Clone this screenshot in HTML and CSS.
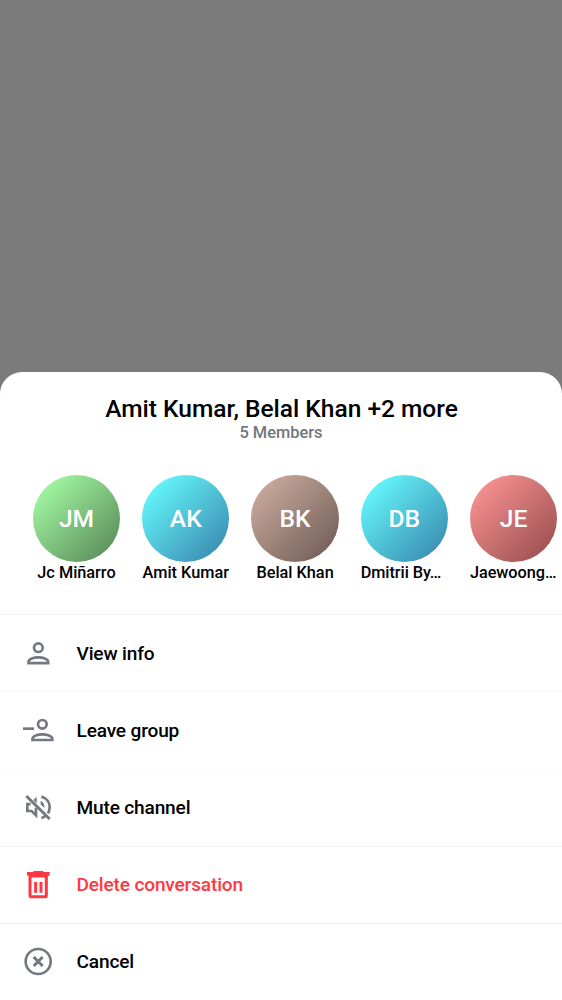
FILE: index.html
```html
<!DOCTYPE html>
<html lang="en">
<head>
<meta charset="utf-8">
<title>Channel options</title>
<link rel="stylesheet" href="styles.css">
</head>
<body>
<main class="sheet">
  <header class="header">
    <h1 class="title">Amit Kumar, Belal Khan +2 more</h1>
    <p class="subtitle">5 Members</p>
  </header>
  <ul class="members">
    <li class="member"><div class="avatar green">JM</div><span class="name">Jc Miñarro</span></li>
    <li class="member"><div class="avatar cyan">AK</div><span class="name">Amit Kumar</span></li>
    <li class="member"><div class="avatar brown">BK</div><span class="name">Belal Khan</span></li>
    <li class="member"><div class="avatar cyan">DB</div><span class="name clipped">Dmitrii By…</span></li>
    <li class="member"><div class="avatar red">JE</div><span class="name clipped">Jaewoong…</span></li>
  </ul>
  <nav class="options">
    <a class="option">
      <svg class="icon" viewBox="0 0 168 138"><circle cx="85" cy="53" r="13"/><path d="M55.500 99.500V96C55.500 87 72 82 85 82S114.500 87 114.500 96V99.500Z"/></svg>
      <span class="label">View info</span>
    </a>
    <a class="option soft">
      <svg class="icon" viewBox="0 0 168 138"><path d="M39 62H72"/><circle cx="97" cy="49" r="13"/><path d="M67.500 96V92.500C67.500 83.500 84 79 97 79S127 83.500 127 92.500V96Z"/></svg>
      <span class="label">Leave group</span>
    </a>
    <a class="option faint">
      <svg class="icon" viewBox="0 0 168 138"><path d="M62 57.500H52V78H65L78 91V68"/><path class="gray" d="M70 45L80 35V55Z"/><path d="M94 35C110 39 119 52 119 66C119 73 117 80 114 85M107 92C103 96 99 98 94 99"/><path class="gray" d="M92 47C100 51 104 58 103 69L92 58Z"/><path d="M49 33L119 102" stroke-width="9"/></svg>
      <span class="label raised">Mute channel</span>
    </a>
    <a class="option danger">
      <svg class="icon" viewBox="0 0 168 138"><path class="solid" d="M51 30H70V27H100V30H119V41H51Z"/><rect x="60" y="42" width="49" height="62" rx="2" stroke-width="9"/><path d="M77 60V92M93 60V92" stroke-width="9"/></svg>
      <span class="label raised">Delete conversation</span>
    </a>
    <a class="option last">
      <svg class="icon" viewBox="0 0 168 138"><circle cx="84.500" cy="70.500" r="37.500"/><path d="M71 57L98 84M98 57L71 84" stroke-width="9"/></svg>
      <span class="label">Cancel</span>
    </a>
  </nav>
</main>
</body>
</html>
```
FILE: styles.css
```css
* { box-sizing: border-box; }

body {
  margin: 0;
  height: 1000px;
  overflow: hidden;
  display: flex;
  flex-direction: column;
  justify-content: flex-end;
  background: #7b7b7b;
  color: #000;
  font-family: Roboto, sans-serif;
  font-weight: 500;
}

.sheet {
  height: 628px;
  background: #fff;
  border-radius: 22px 22px 0 0;
}

.header {
  height: 103px;
  padding-top: 22px;
  text-align: center;
}

.title {
  margin: 0;
  padding-left: 1px;
  font-size: 24.5px;
  line-height: 29px;
  font-weight: 500;
}

.subtitle {
  margin: 0;
  font-size: 16.4px;
  line-height: 19px;
  color: #72767e;
}

.members {
  display: flex;
  gap: 21.900px;
  height: 139px;
  margin: 0;
  padding: 0 0 0 32.800px;
  list-style: none;
}

.member {
  flex: 0 0 87.400px;
  text-align: center;
}

.avatar {
  display: flex;
  align-items: center;
  justify-content: center;
  height: 87.400px;
  border-radius: 50%;
  color: #fff;
  font-size: 24.600px;
}

.green { background: linear-gradient(135deg, #a2f9a2 10%, #5b8c5b 92%); }
.cyan { background: linear-gradient(135deg, #62f2f8 15%, #3b8bb0 92%); }
.brown { background: linear-gradient(135deg, #c9aa9c 10%, #725e58 92%); }
.red { background: linear-gradient(135deg, #f89292 10%, #9c4f50 92%); }

.name {
  display: block;
  padding-top: 1px;
  font-size: 16.300px;
  line-height: 19px;
  white-space: nowrap;
}

.clipped {
  text-align: left;
  letter-spacing: -0.050px;
}

.option {
  display: flex;
  align-items: center;
  height: 77px;
  padding-left: 10px;
  border-top: 1px solid #f0f0f0;
}

.option.soft {
  height: 78px;
  border-color: #f6f6f6;
}

.option.faint { border-color: #fcfcfc; }
.option.last { padding-bottom: 2px; }

.icon {
  width: 56px;
  height: 46px;
  fill: none;
  stroke: #747881;
  stroke-width: 8;
}

.label {
  margin-left: 10.500px;
  font-size: 19.100px;
  line-height: 23px;
  letter-spacing: -0.170px;
}

.raised { margin-bottom: 2px; }

.danger { color: #ff3742; }
.danger .icon { stroke: #ff3742; }
.solid { fill: #ff3742; stroke: none; }
.gray { fill: #747881; stroke: none; }
```
